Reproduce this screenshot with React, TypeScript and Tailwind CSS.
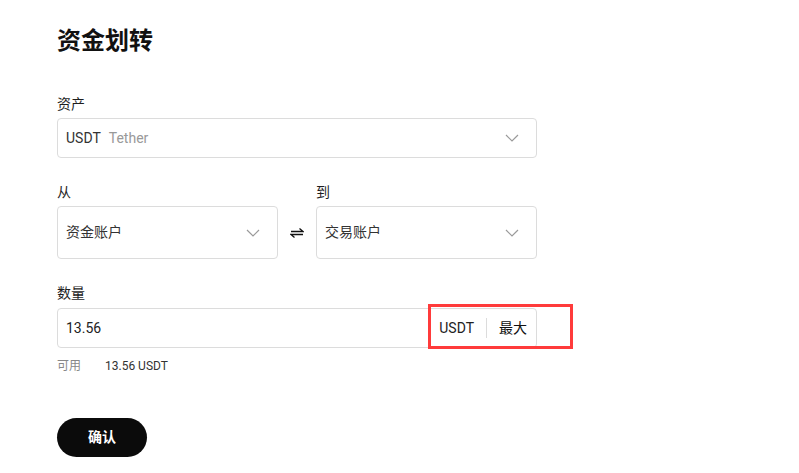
import React from "react";

const font = { fontFamily: '"Roboto", "Noto Sans CJK SC", sans-serif' };

function Chevron() {
  return (
    <svg width="14" height="8" viewBox="0 0 14 8" fill="none">
      <path d="M1 1L7 7L13 1" stroke="#9a9a9a" strokeWidth="1.2" />
    </svg>
  );
}

function Swap() {
  return (
    <svg width="14" height="10" viewBox="0 0 14 10" fill="none">
      <path d="M1 3.5H13L9.5 0.5" stroke="#111" strokeWidth="1.3" />
      <path d="M13 6.5H1L4.5 9.5" stroke="#111" strokeWidth="1.3" />
    </svg>
  );
}

export default function App() {
  return (
    <div className="w-[799px] h-[473px] bg-white relative overflow-hidden" style={font}>
      <div className="pl-[57px] pt-[25px] w-[537px] box-content">
        <h1 className="text-[24px] leading-[32px] font-bold text-[#111]">资金划转</h1>

        <div className="mt-[37px] text-[14px] leading-[20px] text-[#1e1e1e]">资产</div>
        <div className="mt-[4px] h-[40px] w-[480px] border border-[#dcdcdc] rounded-[4px] flex items-center pl-[8px] pr-[17px]">
          <span className="text-[14px] text-[#333]">USDT</span>
          <span className="text-[14px] text-[#999] ml-[8px]">Tether</span>
          <span className="ml-auto flex"><Chevron /></span>
        </div>

        <div className="mt-[24px] flex w-[480px]">
          <div className="w-[221px]">
            <div className="text-[14px] leading-[20px] text-[#1e1e1e]">从</div>
            <div className="mt-[4px] h-[53px] border border-[#dcdcdc] rounded-[4px] flex items-center pl-[8px] pr-[17px]">
              <span className="text-[14px] text-[#333]">资金账户</span>
              <span className="ml-auto flex"><Chevron /></span>
            </div>
          </div>
          <div className="w-[38px] flex items-end justify-center pb-[21px]">
            <Swap />
          </div>
          <div className="w-[221px]">
            <div className="text-[14px] leading-[20px] text-[#1e1e1e]">到</div>
            <div className="mt-[4px] h-[53px] border border-[#dcdcdc] rounded-[4px] flex items-center pl-[8px] pr-[17px]">
              <span className="text-[14px] text-[#333]">交易账户</span>
              <span className="ml-auto flex"><Chevron /></span>
            </div>
          </div>
        </div>

        <div className="mt-[24px] text-[14px] leading-[20px] text-[#1e1e1e]">数量</div>
        <div className="mt-[5px] h-[40px] w-[480px] border border-[#dcdcdc] rounded-[4px] flex items-center pl-[8px] pr-[9px]">
          <span className="text-[14px] text-[#222]">13.56</span>
          <span className="ml-auto text-[14px] text-[#222]">USDT</span>
          <span className="w-px h-[20px] bg-[#dcdcdc] mx-[12px]" />
          <span className="text-[14px] text-[#111]">最大</span>
        </div>

        <div className="mt-[10px] flex text-[12px] leading-[16px]">
          <span className="text-[#888] w-[48px]">可用</span>
          <span className="text-[#333]">13.56 USDT</span>
        </div>

        <button className="mt-[44px] w-[90px] h-[39px] rounded-full bg-[#0b0b0b] text-white text-[14px] font-bold">确认</button>
      </div>

      <div className="absolute left-[428px] top-[304px] w-[145px] h-[45px] border-[3px] border-[#ff3b3b]" />
    </div>
  );
}
